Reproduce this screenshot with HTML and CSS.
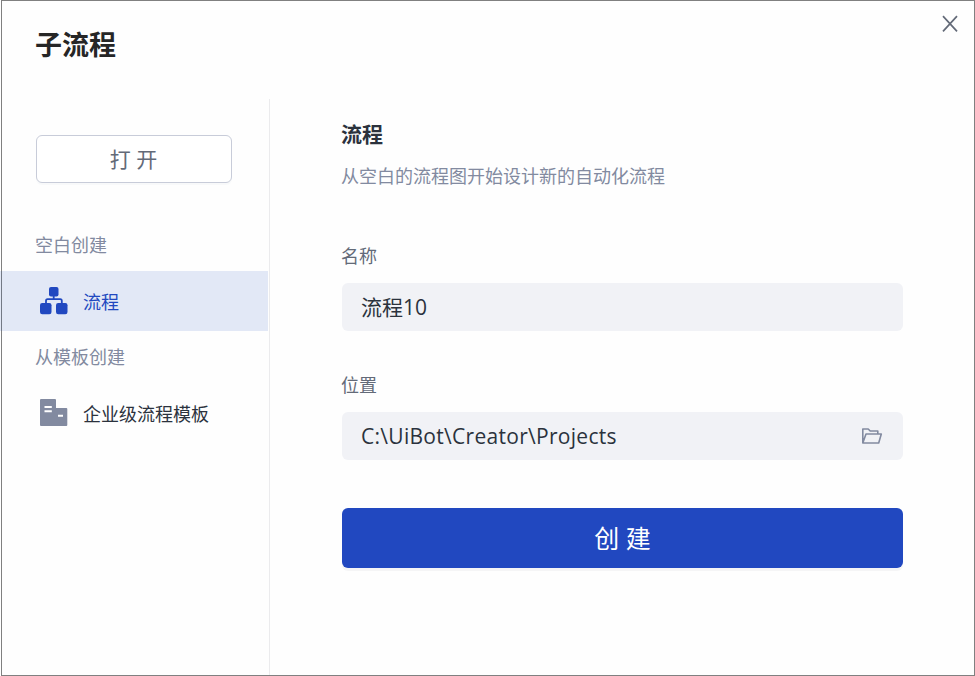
FILE: index.html
```html
<!DOCTYPE html>
<html lang="zh-CN">
<head>
<meta charset="utf-8">
<title>子流程</title>
<link rel="stylesheet" href="styles.css">
</head>
<body>
<div class="dialog">
  <header class="header">
    <h1 class="title">子流程</h1>
    <svg class="close" width="16" height="18" viewBox="0 0 16 18"><path d="M1 1.2 15 16.3M15 1.2 1 16.3" fill="none" stroke="#636a78" stroke-width="1.7"/></svg>
  </header>
  <div class="content">
    <nav class="sidebar">
      <div class="open">打 开</div>
      <div class="group">空白创建</div>
      <div class="item active">
        <svg width="28" height="28" viewBox="0 0 28 28"><g fill="#2148c0"><rect x="9" y="0" width="9.5" height="9.5" rx="2"/><rect x="0" y="16" width="11.5" height="11.3" rx="2.2"/><rect x="16" y="16" width="11.5" height="11.3" rx="2.2"/></g><path d="M13.7 9v3.2M6 17v-3.2q0-1.6 1.6-1.6h12.6q1.6 0 1.6 1.6V17" fill="none" stroke="#2148c0" stroke-width="1.8"/></svg>
        <span>流程</span>
      </div>
      <div class="group template">从模板创建</div>
      <div class="item">
        <svg width="28" height="28" viewBox="0 0 28 28"><path d="M1 0h14q1 0 1 1v8h10.3q1 0 1 1v16q0 1-1 1H1q-1 0-1-1V1q0-1 1-1z" fill="#828aa0"/><path d="M4.5 8h7.3M4.5 12.2h7.3M18 16.8h5" stroke="#fff" stroke-width="2"/></svg>
        <span>企业级流程模板</span>
      </div>
    </nav>
    <main class="main">
      <h2 class="heading">流程</h2>
      <p class="desc">从空白的流程图开始设计新的自动化流程</p>
      <div class="label">名称</div>
      <div class="field name"><span>流程10</span></div>
      <div class="label">位置</div>
      <div class="field path"><span>C:\UiBot\Creator\Projects</span>
        <svg width="22" height="18" viewBox="0 0 22 18"><path d="M1.8 16V2h5.4l2 2h7.6v3M1.8 16 5 7h15.3l-2.6 9z" fill="none" stroke="#828aa0" stroke-width="1.6" stroke-linejoin="round"/></svg>
      </div>
      <div class="create">创 建</div>
    </main>
  </div>
</div>
</body>
</html>
```
FILE: styles.css
```css
* { box-sizing: border-box; }
body {
  margin: 0;
  background: #fff;
  font-family: "Open Sans", "Noto Sans CJK SC", sans-serif;
  color: #2b323d;
}
svg { display: block; flex: none; }
.dialog {
  width: 974px;
  height: 676px;
  margin-left: 1px;
  border: 1px solid #808080;
  background: #fefefe;
  display: flex;
  flex-direction: column;
}
.header {
  height: 98px;
  padding: 14px 16px 0 33px;
  display: flex;
  justify-content: space-between;
}
.title {
  margin: 10px 0 0;
  font-size: 27px;
  line-height: 40px;
  font-weight: 700;
  color: #262626;
}
.content { flex: 1; display: flex; }
.sidebar {
  width: 268px;
  border-right: 1px solid #ebebed;
  padding-top: 36px;
}
.open {
  width: 196px;
  height: 48px;
  margin: 0 0 32px 34px;
  padding-right: 1px;
  border: 1px solid #c8ccd9;
  border-radius: 6px;
  box-shadow: 0 2px 1px #f8f9fa;
  background: #fff;
  color: #636a78;
  font-size: 21px;
  line-height: 46px;
  text-align: center;
}
.group {
  height: 56px;
  padding-left: 33px;
  font-size: 18px;
  line-height: 60px;
  color: #828aa0;
}
.group.template { height: 52px; line-height: 52px; }
.item {
  height: 60px;
  display: flex;
  align-items: center;
  gap: 15px;
  padding-left: 38px;
  font-size: 18px;
}
.item span { padding-bottom: 1px; }
.item.active {
  width: 268px;
  margin-left: -2px;
  padding-left: 40px;
  background: linear-gradient(to right, transparent 1px, #737985 1px 2px, transparent 2px) #e2e8f6;
  color: #2148c0;
}
.main { width: 561px; margin-left: 72px; padding-top: 19px; }
.heading {
  margin: 0 0 0 -1px;
  font-size: 21px;
  line-height: 32px;
  font-weight: 700;
}
.desc {
  margin: 12px 0 52px -1px;
  font-size: 18px;
  line-height: 28px;
  color: #828aa0;
}
.label {
  font-size: 18px;
  line-height: 28px;
  color: #636a78;
  margin: 0 0 13px -1px;
}
.field {
  height: 48px;
  padding: 0 20px 0 19px;
  border-radius: 6px;
  background: #f1f2f6;
  display: flex;
  align-items: center;
  justify-content: space-between;
  font-size: 21px;
}
.field.name { margin-bottom: 40px; padding-bottom: 2px; }
.field.path { margin-bottom: 48px; letter-spacing: 0.29px; }
.create {
  height: 60px;
  border-radius: 6px;
  background: #2148c0;
  box-shadow: 0 3px 0 #f5f5f6;
  color: #fff;
  font-size: 25px;
  line-height: 60px;
  text-align: center;
}
```
